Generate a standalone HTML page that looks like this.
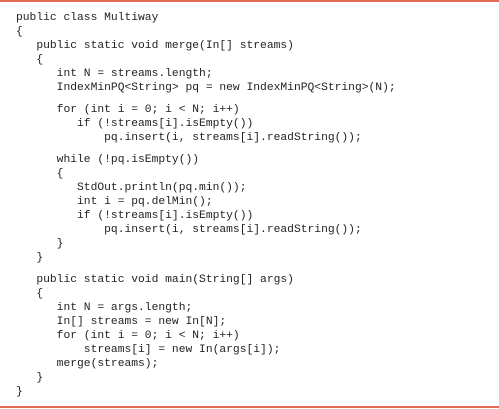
<!DOCTYPE html>
<html><head><style>
html,body{margin:0;padding:0;background:#fff;}
body{width:499px;height:409px;position:relative;overflow:hidden;}
.t{position:absolute;left:0;top:0;width:499px;height:2px;background:#e06a55;}
.b{position:absolute;left:0;top:406px;width:499px;height:2px;background:#e06a55;}
pre{position:absolute;left:16px;top:11px;margin:0;font-family:"Liberation Mono",monospace;font-size:11.3px;line-height:14px;color:#222;}
.s{display:block;height:8px;}
</style></head><body>
<div class="t"></div>
<pre>public class Multiway
{
   public static void merge(In[] streams)
   {
      int N = streams.length;
      IndexMinPQ&lt;String&gt; pq = new IndexMinPQ&lt;String&gt;(N);
<span class="s"></span>      for (int i = 0; i &lt; N; i++)
         if (!streams[i].isEmpty())
             pq.insert(i, streams[i].readString());
<span class="s"></span>      while (!pq.isEmpty())
      {
         StdOut.println(pq.min());
         int i = pq.delMin();
         if (!streams[i].isEmpty())
             pq.insert(i, streams[i].readString());
      }
   }
<span class="s"></span>   public static void main(String[] args)
   {
      int N = args.length;
      In[] streams = new In[N];
      for (int i = 0; i &lt; N; i++)
          streams[i] = new In(args[i]);
      merge(streams);
   }
}</pre>
<div class="b"></div>
</body></html>
